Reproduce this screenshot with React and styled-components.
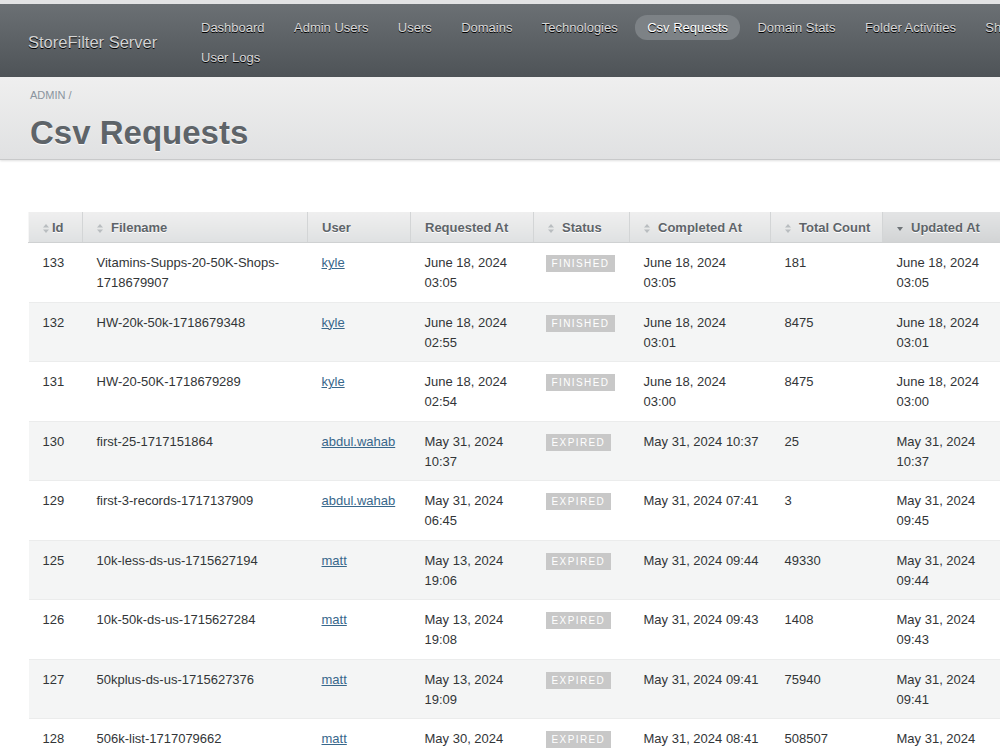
import React from 'react'
import styled, { createGlobalStyle, css } from 'styled-components'

const GlobalStyle = createGlobalStyle`
  html, body {
    margin: 0;
    padding: 0;
    overflow: hidden;
    background: #ffffff;
    font-family: "Liberation Sans", Arial, Helvetica, sans-serif;
    color: #323537;
  }
`

const Page = styled.div`
  min-width: 1100px;
`

// dark top bar with the site name and the tabs
const Header = styled.div`
  display: flex;
  align-items: center;
  border-top: 4px solid #e2e3e4;
  padding: 11px 30px 7px 28px;
  background: linear-gradient(180deg, #6b7074 0%, #4e5357 100%);
`

const SiteTitle = styled.h1`
  flex: 0 0 161px;
  margin: 0;
  font-size: 16.5px;
  font-weight: normal;
  color: #d4d4d4;
  text-shadow: #000 0 1px 0;
`

const Tabs = styled.ul`
  display: flex;
  flex-wrap: wrap;
  gap: 5px 5.4px;
  flex: 1;
  margin: 0;
  padding: 0;
  list-style: none;
`

const TabLink = styled.a`
  display: block;
  padding: 5px 12px;
  border-radius: 12px;
  font-size: 13px;
  line-height: 15px;
  color: #d8d8d8;
  text-decoration: none;
  text-shadow: #000 0 1px 0;
  white-space: nowrap;

  ${props => props.$current && css`
    background: #7d8286;
    color: #ffffff;
  `}
`

const TitleBar = styled.div`
  padding: 12px 30px 6px;
  background: linear-gradient(180deg, #efefef 0%, #e0e1e2 100%);
  border-bottom: 1px solid #c8c9ca;
  box-shadow: 0 1px 2px rgba(0, 0, 0, 0.12);
`

const Breadcrumb = styled.div`
  font-size: 11px;
  line-height: 13px;
  color: #8a949e;
  text-transform: uppercase;
`

const PageTitle = styled.h2`
  margin: 11px 0 0;
  font-size: 33px;
  line-height: 40px;
  font-weight: bold;
  color: #5e6469;
  text-shadow: #fff 0 1px 1px;
`

const Main = styled.div`
  padding: 52px 30px 0 28px;
`

const Table = styled.table`
  width: 974px;
  table-layout: fixed;
  border-collapse: collapse;
  border-spacing: 0;
  font-size: 13px;
`

const Th = styled.th`
  height: 30px;
  padding: 0 ${props => (props.$tight ? '6px 0 14px' : '14px')};
  text-align: left;
  white-space: nowrap;
  font-weight: bold;
  color: #5e6469;
  text-shadow: #fff 0 1px 0;
  background: linear-gradient(180deg, #efefef 0%, #dfe1e2 100%);
  border-left: 1px solid #f6f6f6;
  border-right: 1px solid #d3d5d6;
  border-bottom: 1px solid #cfd1d2;
  box-shadow: 0 1px 1px rgba(0, 0, 0, 0.08);

  ${props => props.$sorted && css`
    background: linear-gradient(180deg, #e3e4e5 0%, #d2d4d5 100%);
  `}
`

const SortIcon = styled.svg`
  width: 6px;
  height: 9px;
  margin-right: ${props => (props.$tight ? '3px' : '8px')};
  vertical-align: -1px;
`

const Tr = styled.tr`
  background: ${props => (props.$even ? '#f4f5f5' : '#ffffff')};
`

const Td = styled.td`
  padding: 10px 10px 8.5px 14px;
  line-height: 20px;
  vertical-align: top;
  color: #323537;
  border-bottom: 1px solid #ebecec;
`

const UserLink = styled.a`
  color: #38678b;
  text-decoration: underline;
`

const StatusTag = styled.span`
  display: inline-block;
  margin-left: -2px;
  padding: 3px 6px;
  font-size: 10px;
  line-height: 11px;
  letter-spacing: 1.4px;
  text-transform: uppercase;
  color: #ffffff;
  background: #c8c8c8;
`

const tabs = [
  'Dashboard', 'Admin Users', 'Users', 'Domains', 'Technologies',
  'Csv Requests', 'Domain Stats', 'Folder Activities', 'Shops', 'User Logs'
]

const columns = [
  { label: 'Id', width: 54, sort: 'both', tight: true },
  { label: 'Filename', width: 225, sort: 'both' },
  { label: 'User', width: 103 },
  { label: 'Requested At', width: 123 },
  { label: 'Status', width: 96, sort: 'both' },
  { label: 'Completed At', width: 141, sort: 'both' },
  { label: 'Total Count', width: 112, sort: 'both' },
  { label: 'Updated At', width: 120, sort: 'desc' }
]

const rows = [
  { id: 133, file: 'Vitamins-Supps-20-50K-Shops-1718679907', user: 'kyle', requested: 'June 18, 2024 03:05', status: 'finished', completed: 'June 18, 2024 03:05', total: 181, updated: 'June 18, 2024 03:05' },
  { id: 132, file: 'HW-20k-50k-1718679348', user: 'kyle', requested: 'June 18, 2024 02:55', status: 'finished', completed: 'June 18, 2024 03:01', total: 8475, updated: 'June 18, 2024 03:01' },
  { id: 131, file: 'HW-20-50K-1718679289', user: 'kyle', requested: 'June 18, 2024 02:54', status: 'finished', completed: 'June 18, 2024 03:00', total: 8475, updated: 'June 18, 2024 03:00' },
  { id: 130, file: 'first-25-1717151864', user: 'abdul.wahab', requested: 'May 31, 2024 10:37', status: 'expired', completed: 'May 31, 2024 10:37', total: 25, updated: 'May 31, 2024 10:37' },
  { id: 129, file: 'first-3-records-1717137909', user: 'abdul.wahab', requested: 'May 31, 2024 06:45', status: 'expired', completed: 'May 31, 2024 07:41', total: 3, updated: 'May 31, 2024 09:45' },
  { id: 125, file: '10k-less-ds-us-1715627194', user: 'matt', requested: 'May 13, 2024 19:06', status: 'expired', completed: 'May 31, 2024 09:44', total: 49330, updated: 'May 31, 2024 09:44' },
  { id: 126, file: '10k-50k-ds-us-1715627284', user: 'matt', requested: 'May 13, 2024 19:08', status: 'expired', completed: 'May 31, 2024 09:43', total: 1408, updated: 'May 31, 2024 09:43' },
  { id: 127, file: '50kplus-ds-us-1715627376', user: 'matt', requested: 'May 13, 2024 19:09', status: 'expired', completed: 'May 31, 2024 09:41', total: 75940, updated: 'May 31, 2024 09:41' },
  { id: 128, file: '506k-list-1717079662', user: 'matt', requested: 'May 30, 2024 22:15', status: 'expired', completed: 'May 31, 2024 08:41', total: 508507, updated: 'May 31, 2024 08:41' }
]

const Sort = ({ dir, tight }) => (
  <SortIcon viewBox='0 0 6 9' $tight={tight}>
    {dir === 'desc'
      ? <path d='M0 3 L6 3 L3 7 Z' fill='#6f7478' />
      : (
        <>
          <path d='M0 3.5 L6 3.5 L3 0 Z' fill='#b9bdc0' />
          <path d='M0 5.5 L6 5.5 L3 9 Z' fill='#b9bdc0' />
        </>
        )}
  </SortIcon>
)

const App = () => {
  return (
    <Page>
      <GlobalStyle />
      <Header>
        <SiteTitle>StoreFilter Server</SiteTitle>
        <Tabs>
          {tabs.map(tab => (
            <li key={tab}>
              <TabLink href='#' $current={tab === 'Csv Requests'}>{tab}</TabLink>
            </li>
          ))}
        </Tabs>
      </Header>

      <TitleBar>
        <Breadcrumb>Admin /</Breadcrumb>
        <PageTitle>Csv Requests</PageTitle>
      </TitleBar>

      <Main>
        <Table>
          <colgroup>
            {columns.map(col => (
              <col key={col.label} width={col.width} />
            ))}
          </colgroup>
          <thead>
            <tr>
              {columns.map(col => (
                <Th key={col.label} $sorted={col.sort === 'desc'} $tight={col.tight}>
                  {col.sort && <Sort dir={col.sort} tight={col.tight} />}
                  {col.label}
                </Th>
              ))}
            </tr>
          </thead>
          <tbody>
            {rows.map((row, i) => (
              <Tr key={row.id} $even={i % 2 === 1}>
                <Td>{row.id}</Td>
                <Td>{row.file}</Td>
                <Td><UserLink href='#'>{row.user}</UserLink></Td>
                <Td>{row.requested}</Td>
                <Td><StatusTag>{row.status}</StatusTag></Td>
                <Td>{row.completed}</Td>
                <Td>{row.total}</Td>
                <Td>{row.updated}</Td>
              </Tr>
            ))}
          </tbody>
        </Table>
      </Main>
    </Page>
  )
}

export default App
